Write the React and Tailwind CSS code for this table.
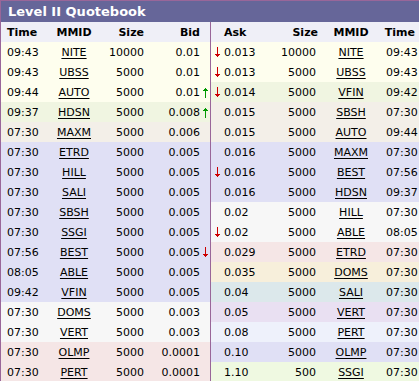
import React from "react";

const C = {
  y: "bg-[#fefeee]",
  g: "bg-[#f0f5e1]",
  b: "bg-[#f3efe8]",
  l: "bg-[#e0e0f5]",
  w: "bg-[#f7f7f7]",
  p: "bg-[#f5e6e6]",
  o: "bg-[#f7efdb]",
  t: "bg-[#dce8eb]",
  v: "bg-[#e9e0f2]",
  s: "bg-[#eef1fb]",
  n: "bg-[#eff9e1]",
};

const rows = [
  { l: ["09:43", "NITE", "10000", "0.01", null, "y"], r: [null, "0.013", "10000", "NITE", "09:43", "y"] },
  { l: ["09:43", "UBSS", "5000", "0.01", null, "y"], r: ["d", "0.013", "5000", "UBSS", "09:43", "y"] },
  { l: ["09:44", "AUTO", "5000", "0.01", "u", "y"], r: ["d", "0.014", "5000", "VFIN", "09:42", "g"] },
  { l: ["09:37", "HDSN", "5000", "0.008", "u", "g"], r: [null, "0.015", "5000", "SBSH", "07:30", "b"] },
  { l: ["07:30", "MAXM", "5000", "0.006", null, "b"], r: [null, "0.015", "5000", "AUTO", "09:44", "b"] },
  { l: ["07:30", "ETRD", "5000", "0.005", null, "l"], r: [null, "0.016", "5000", "MAXM", "07:30", "l"] },
  { l: ["07:30", "HILL", "5000", "0.005", null, "l"], r: ["d", "0.016", "5000", "BEST", "07:56", "l"] },
  { l: ["07:30", "SALI", "5000", "0.005", null, "l"], r: [null, "0.016", "5000", "HDSN", "09:37", "l"] },
  { l: ["07:30", "SBSH", "5000", "0.005", null, "l"], r: [null, "0.02", "5000", "HILL", "07:30", "w"] },
  { l: ["07:30", "SSGI", "5000", "0.005", null, "l"], r: ["d", "0.02", "5000", "ABLE", "08:05", "w"] },
  { l: ["07:56", "BEST", "5000", "0.005", "d", "l"], r: [null, "0.029", "5000", "ETRD", "07:30", "p"] },
  { l: ["08:05", "ABLE", "5000", "0.005", null, "l"], r: [null, "0.035", "5000", "DOMS", "07:30", "o"] },
  { l: ["09:42", "VFIN", "5000", "0.005", null, "l"], r: [null, "0.04", "5000", "SALI", "07:30", "t"] },
  { l: ["07:30", "DOMS", "5000", "0.003", null, "w"], r: [null, "0.05", "5000", "VERT", "07:30", "v"] },
  { l: ["07:30", "VERT", "5000", "0.003", null, "w"], r: [null, "0.08", "5000", "PERT", "07:30", "s"] },
  { l: ["07:30", "OLMP", "5000", "0.0001", null, "p"], r: [null, "0.10", "5000", "OLMP", "07:30", "l"] },
  { l: ["07:30", "PERT", "5000", "0.0001", null, "p"], r: [null, "1.10", "500", "SSGI", "07:30", "n"] },
];

// rows 1 ask arrow
rows[0].r[0] = "d";

function Arrow({ dir }) {
  if (!dir) return null;
  const color = dir === "u" ? "#009900" : "#cc0000";
  return (
    <svg width="5" height="11" viewBox="0 0 5 11" className="block" shapeRendering="crispEdges">
      {dir === "d" ? (
        <g fill={color}>
          <rect x="2" y="0" width="1" height="10" />
          <rect x="1" y="7" width="3" height="2" />
          <rect x="0" y="7" width="5" height="1" />
        </g>
      ) : (
        <g fill={color}>
          <rect x="2" y="1" width="1" height="10" />
          <rect x="1" y="2" width="3" height="2" />
          <rect x="0" y="3" width="5" height="1" />
        </g>
      )}
    </svg>
  );
}

export default function App() {
  return (
    <div
      className="w-[419px] h-[381px] overflow-hidden bg-white text-black"
      style={{ fontFamily: '"DejaVu Sans", Verdana, sans-serif' }}
    >
      <div className="border-l border-t border-[#996699]">
        <div className="h-[21px] bg-[#666699] flex items-center pl-[7px] text-white font-bold text-[13px] leading-none">
          Level II Quotebook
        </div>
        <div className="flex h-[20px] bg-[#efeff7] text-[11px] font-bold leading-none">
          <div className="w-[209px] flex items-center">
            <div className="w-[49px] pl-[6px]">Time</div>
            <div className="w-[48px] text-center">MMID</div>
            <div className="w-[46px] text-right">Size</div>
            <div className="w-[56px] text-right">Bid</div>
          </div>
          <div className="w-px bg-[#996699]" />
          <div className="flex-1 flex items-center">
            <div className="w-[13px]" />
            <div className="w-[40px]">Ask</div>
            <div className="w-[54px] text-right">Size</div>
            <div className="w-[66px] text-center">MMID</div>
            <div className="w-[31px] text-right">Time</div>
          </div>
        </div>
        {rows.map((row, i) => (
          <div key={i} className="flex h-[20px] text-[11px] leading-none">
            <div className={`w-[209px] flex items-center ${C[row.l[5]]}`}>
              <div className="w-[49px] pl-[6px]">{row.l[0]}</div>
              <div className="w-[48px] text-center underline underline-offset-2">{row.l[1]}</div>
              <div className="w-[46px] text-right">{row.l[2]}</div>
              <div className="w-[56px] text-right">{row.l[3]}</div>
              <div className="w-[10px] flex justify-center pl-[1px]">
                <Arrow dir={row.l[4]} />
              </div>
            </div>
            <div className="w-px bg-[#996699]" />
            <div className={`flex-1 flex items-center ${C[row.r[5]]}`}>
              <div className="w-[13px] flex justify-center">
                <Arrow dir={row.r[0]} />
              </div>
              <div className="w-[40px]">{row.r[1]}</div>
              <div className="w-[52px] text-right">{row.r[2]}</div>
              <div className="w-[70px] text-center underline underline-offset-2">{row.r[3]}</div>
              <div className="w-[29px] text-right">{row.r[4]}</div>
            </div>
          </div>
        ))}
      </div>
    </div>
  );
}
